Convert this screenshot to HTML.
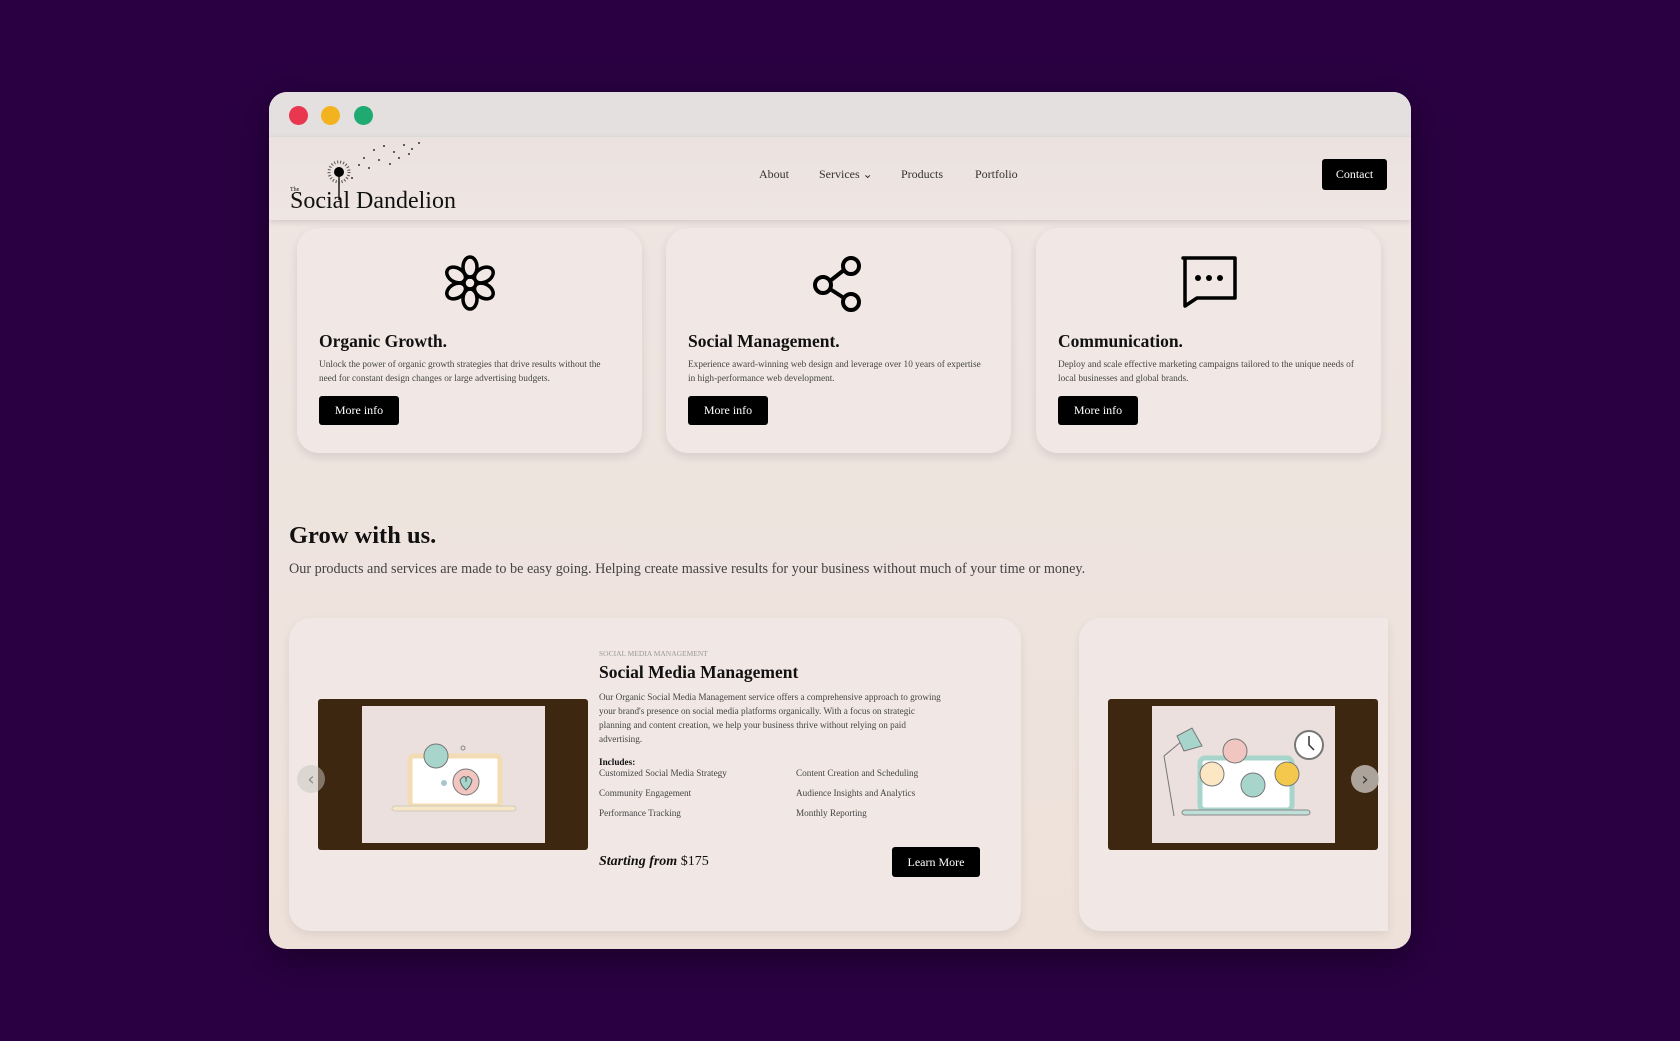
<!DOCTYPE html>
<html><head><meta charset="utf-8"><style>
*{margin:0;padding:0;box-sizing:border-box}
body{width:1680px;height:1041px;background:#2a0042;font-family:"Liberation Serif",serif;position:relative;overflow:hidden;color:#111}
.win{position:absolute;left:269px;top:92px;width:1142px;height:857px;border-radius:18px;overflow:hidden;background:linear-gradient(180deg,#efe6e2,#eee1da);box-shadow:0 10px 40px rgba(0,0,0,.4)}
.bar{height:45px;background:#e3e0df;position:relative}
.dot{position:absolute;top:14px;width:19px;height:19px;border-radius:50%}
.hdr{position:absolute;top:45px;left:0;right:0;height:83px;background:linear-gradient(180deg,#ebe2df,#efe6e3);box-shadow:0 2px 6px rgba(0,0,0,.12)}
.logo{position:absolute;left:21px;top:51px;font-size:24px;color:#111}
.nav a{position:absolute;top:30px;font-size:12px;color:#333;text-decoration:none}
.btn{position:absolute;background:#000;color:#fff;font-size:12px;display:flex;align-items:center;justify-content:center;border-radius:3px}
.card{position:absolute;top:136px;width:345px;height:225px;background:#f1e8e5;border-radius:22px;box-shadow:0 4px 10px rgba(0,0,0,.1)}
.card svg{position:absolute;left:50%;top:26px;transform:translateX(-50%)}
.card h3{position:absolute;left:22px;top:103px;font-size:17.5px;font-weight:bold}
.card p{position:absolute;left:22px;top:130px;width:300px;font-size:9.3px;line-height:14px;color:#444}
.card .btn{left:22px;top:168px;width:80px;height:29px}
.big{position:absolute;top:526px;height:313px;background:#f1e8e5;border-radius:22px;box-shadow:0 4px 10px rgba(0,0,0,.08)}
.img{position:absolute;background:#3e2710;border-radius:3px;width:270px;height:151px;top:81px}
.img .in{position:absolute;left:44px;top:7px;width:183px;height:137px;background:#ebe0de}
.t{position:absolute;font-size:9.2px;color:#444}
.arr{position:absolute;width:28px;height:28px;border-radius:50%;background:rgba(200,195,190,.8);font-family:"DejaVu Sans";font-size:18px;color:#333;display:flex;align-items:center;justify-content:center}
</style></head><body>
<div class="win">
 <div class="bar">
  <div class="dot" style="left:20px;background:#e8374f"></div>
  <div class="dot" style="left:52px;background:#f2b31e"></div>
  <div class="dot" style="left:85px;background:#1faa72"></div>
 </div>
 <div class="hdr">
  <svg style="position:absolute;left:55px;top:2px" width="110" height="62" viewBox="0 0 110 60">
   <g fill="#333"><circle cx="50" cy="10" r="1"/><circle cx="60" cy="6" r="1"/><circle cx="70" cy="12" r="1"/><circle cx="80" cy="5" r="1"/><circle cx="88" cy="9" r="1"/><circle cx="95" cy="3" r="1"/><circle cx="40" cy="18" r="1"/><circle cx="55" cy="20" r="1"/><circle cx="66" cy="24" r="1"/><circle cx="45" cy="28" r="1"/><circle cx="75" cy="18" r="1"/><circle cx="35" cy="25" r="1"/><circle cx="28" cy="38" r="1"/><circle cx="85" cy="14" r="1"/></g>
   <circle cx="15" cy="32" r="10" fill="none" stroke="#555" stroke-width="3" stroke-dasharray="1 2"/>
   <circle cx="15" cy="32" r="5" fill="#000"/><line x1="15" y1="32" x2="15" y2="60" stroke="#000" stroke-width="1.3"/>
  </svg>
  <div style="position:absolute;left:21px;top:50px;font-size:6px">The</div>
  <div class="logo">Social Dandelion</div>
  <div class="nav"><a style="left:490px">About</a><a style="left:550px">Services ⌄</a><a style="left:632px">Products</a><a style="left:706px">Portfolio</a></div>
  <div class="btn" style="left:1053px;top:22px;width:65px;height:31px">Contact</div>
 </div>
 <div class="card" style="left:28px">
  <svg width="56" height="58" viewBox="0 0 56 58" fill="none" stroke="#000" stroke-width="3.5"><g transform="translate(28,29)"><circle r="6"/><g id="p"><ellipse cx="0" cy="-16" rx="7" ry="10"/></g><use href="#p" transform="rotate(60)"/><use href="#p" transform="rotate(120)"/><use href="#p" transform="rotate(180)"/><use href="#p" transform="rotate(240)"/><use href="#p" transform="rotate(300)"/></g></svg>
  <h3>Organic Growth.</h3><p>Unlock the power of organic growth strategies that drive results without the need for constant design changes or large advertising budgets.</p><div class="btn">More info</div></div>
 <div class="card" style="left:397px">
  <svg width="56" height="60" viewBox="0 0 56 60" fill="none" stroke="#000" stroke-width="4"><circle cx="40" cy="12" r="8"/><circle cx="12" cy="31" r="8"/><circle cx="40" cy="48" r="8"/><path d="M19 27L33 16M19 35L33 44"/></svg>
  <h3>Social Management.</h3><p>Experience award-winning web design and leverage over 10 years of expertise in high-performance web development.</p><div class="btn">More info</div></div>
 <div class="card" style="left:767px">
  <svg width="60" height="56" viewBox="0 0 60 56" fill="none" stroke="#000" stroke-width="3.5"><path d="M4 4H56V44H18L6 52V4Z" stroke-linejoin="round"/><g fill="#000" stroke="none"><circle cx="19" cy="24" r="3"/><circle cx="30" cy="24" r="3"/><circle cx="41" cy="24" r="3"/></g></svg>
  <h3>Communication.</h3><p>Deploy and scale effective marketing campaigns tailored to the unique needs of local businesses and global brands.</p><div class="btn">More info</div></div>
 <div style="position:absolute;left:20px;top:430px;font-size:24.5px;font-weight:bold">Grow with us.</div>
 <div style="position:absolute;left:20px;top:469px;font-size:14.2px;color:#444">Our products and services are made to be easy going. Helping create massive results for your business without much of your time or money.</div>
 <div class="big" style="left:20px;width:732px">
  <div class="img" style="left:29px"><div class="in">
   <svg width="183" height="137" viewBox="0 0 183 137"><rect x="48" y="50" width="90" height="50" rx="4" fill="#fff" stroke="#f3dbb3" stroke-width="5"/><rect x="30" y="100" width="124" height="5" rx="3" fill="#f7e6c8" stroke="#ccb" /><circle cx="74" cy="50" r="12" fill="#a7d5cc" stroke="#777"/><circle cx="104" cy="76" r="13" fill="#f2c6c0" stroke="#777"/><path d="M98 74q6-8 6 2q0-10 6-2q-1 6-6 10q-5-4-6-10z" fill="#a7d5cc" stroke="#666"/><circle cx="101" cy="42" r="2" fill="none" stroke="#888"/><circle cx="82" cy="77" r="3" fill="#a7c5cc"/></svg>
  </div></div>
  <div class="t" style="left:310px;top:31px;font-size:7.5px;color:#999">SOCIAL MEDIA MANAGEMENT</div>
  <div style="position:absolute;left:310px;top:44px;font-size:17.5px;font-weight:bold">Social Media Management</div>
  <div class="t" style="left:310px;top:72px;width:345px;line-height:14px">Our Organic Social Media Management service offers a comprehensive approach to growing your brand's presence on social media platforms organically. With a focus on strategic planning and content creation, we help your business thrive without relying on paid advertising.</div>
  <div class="t" style="left:310px;top:139px;color:#111;font-weight:bold">Includes:</div>
  <div class="t" style="left:310px;top:150px">Customized Social Media Strategy</div>
  <div class="t" style="left:310px;top:170px">Community Engagement</div>
  <div class="t" style="left:310px;top:190px">Performance Tracking</div>
  <div class="t" style="left:507px;top:150px">Content Creation and Scheduling</div>
  <div class="t" style="left:507px;top:170px">Audience Insights and Analytics</div>
  <div class="t" style="left:507px;top:190px">Monthly Reporting</div>
  <div style="position:absolute;left:310px;top:236px;font-size:14px"><i style="font-weight:bold">Starting from</i> $175</div>
  <div class="btn" style="left:603px;top:229px;width:88px;height:30px">Learn More</div>
 </div>
 <div class="big" style="left:810px;width:309px;border-radius:22px 0 0 22px">
  <div class="img" style="left:29px"><div class="in">
   <svg width="183" height="137" viewBox="0 0 183 137"><rect x="48" y="52" width="92" height="52" rx="5" fill="#fff" stroke="#a7d5cc" stroke-width="5"/><rect x="30" y="104" width="128" height="5" rx="3" fill="#bfe0d8" stroke="#888"/><path d="M22 110L12 50L30 35" stroke="#777" fill="none"/><path d="M25 30l15-8l10 18l-18 5z" fill="#a7d5cc" stroke="#777"/><circle cx="60" cy="68" r="12" fill="#fbe7c4" stroke="#777"/><circle cx="83" cy="45" r="12" fill="#f2c6c0" stroke="#777"/><circle cx="101" cy="79" r="12" fill="#a7d5cc" stroke="#777"/><circle cx="135" cy="68" r="12" fill="#f3c84c" stroke="#777"/><circle cx="157" cy="39" r="14" fill="#fff" stroke="#777" stroke-width="2"/><path d="M157 30v9l5 5" stroke="#333" fill="none" stroke-width="1.5"/></svg>
  </div></div>
 </div>
 <div class="arr" style="left:28px;top:673px;background:rgba(200,195,190,.5);color:#888">‹</div>
 <div class="arr" style="left:1082px;top:673px">›</div>
</div>
</body></html>
